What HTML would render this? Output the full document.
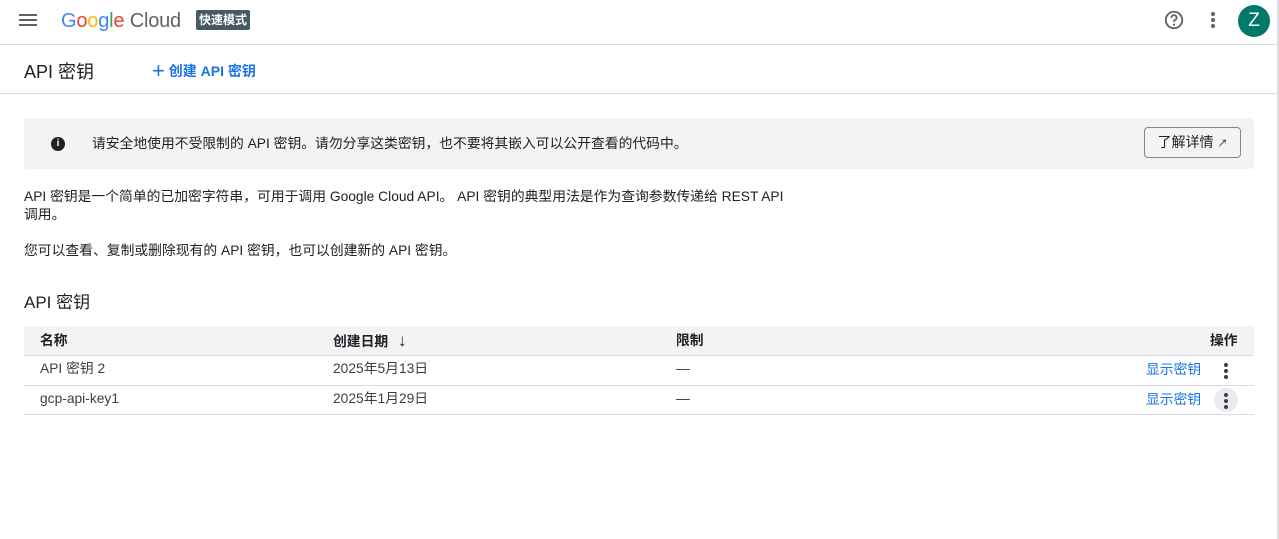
<!DOCTYPE html><html><head><meta charset="utf-8"><style>
body{margin:0;width:1279px;height:539px;overflow:hidden;background:#fff;font-family:"Liberation Sans","Noto Sans CJK SC",sans-serif;color:#202124;position:relative}
.a{position:absolute}
.hdr{left:0;top:0;width:1279px;height:44px;border-bottom:1px solid #dadce0}
.sub{left:0;top:45px;width:1279px;height:48px;border-bottom:1px solid #dadce0}
.t{font-size:13.8px;white-space:nowrap;line-height:16px}
.row{left:24px;width:1230px;border-bottom:1px solid #dadce0;height:29px}
</style></head><body>
<div class="a hdr"></div>
<div class="a" style="left:19px;top:14px;width:18px;height:2px;background:#5f6368;box-shadow:0 5px 0 #5f6368,0 10px 0 #5f6368"></div>
<div class="a" style="left:61px;top:10px;font-size:20px;letter-spacing:-0.2px"><span style="color:#4285f4">G</span><span style="color:#ea4335">o</span><span style="color:#fbbc04">o</span><span style="color:#4285f4">g</span><span style="color:#34a853">l</span><span style="color:#ea4335">e</span> <span style="color:#5f6368">Cloud</span></div>
<div class="a" style="left:196px;top:10px;background:#455a64;color:#fff;font-size:12px;font-weight:bold;padding:0 3px;border-radius:2px;line-height:20px;white-space:nowrap">快速模式</div>
<svg class="a" style="left:1163px;top:9px" width="22" height="22" viewBox="0 0 24 24"><circle cx="12" cy="12" r="9" fill="none" stroke="#5f6368" stroke-width="2"/><path d="M9.2 9.5a2.8 2.8 0 1 1 4 2.5c-.8.4-1.2 1-1.2 2" fill="none" stroke="#5f6368" stroke-width="2"/><circle cx="12" cy="17" r="1.2" fill="#5f6368"/></svg>
<div class="a" style="left:1211px;top:12px;width:4px;height:4px;border-radius:2px;background:#5f6368;box-shadow:0 6px 0 #5f6368,0 12px 0 #5f6368"></div>
<div class="a" style="left:1238px;top:5px;width:32px;height:32px;border-radius:50%;background:#00796b;color:#fff;font-size:19px;text-align:center;line-height:32px">Z</div>
<div class="a sub"></div>
<div class="a" style="left:24px;top:60px;font-size:18px;line-height:24px">API 密钥</div>
<div class="a" style="left:152px;top:59px;color:#1a73e8;font-weight:bold;font-size:14px;line-height:20px;white-space:nowrap"><span style="font-size:22px;font-weight:normal;position:relative;top:2px">+</span> 创建 API 密钥</div>
<div class="a" style="left:24px;top:118px;width:1230px;height:51px;background:#f1f3f4;border-radius:4px"></div>
<div class="a" style="left:51px;top:137px;width:14px;height:14px;border-radius:50%;background:#202124;color:#fff;font-size:10px;font-weight:bold;text-align:center;line-height:14px">i</div>
<div class="a t" style="left:92px;top:136px">请安全地使用不受限制的 API 密钥。请勿分享这类密钥，也不要将其嵌入可以公开查看的代码中。</div>
<div class="a" style="left:1144px;top:127px;width:97px;height:31px;border:1px solid #80868b;border-radius:4px;box-sizing:border-box;text-align:center;line-height:29px;font-size:14px;white-space:nowrap">了解详情 <span style="font-size:10px">↗</span></div>
<div class="a t" style="left:24px;top:188px;line-height:18px">API 密钥是一个简单的已加密字符串，可用于调用 Google Cloud API。 API 密钥的典型用法是作为查询参数传递给 REST API<br>调用。</div>
<div class="a t" style="left:24px;top:243px">您可以查看、复制或删除现有的 API 密钥，也可以创建新的 API 密钥。</div>
<div class="a" style="left:24px;top:291px;font-size:17px;line-height:24px">API 密钥</div>
<div class="a row" style="top:326px;background:#f1f3f4"></div>
<div class="a row" style="top:356px"></div>
<div class="a row" style="top:385px"></div>
<div class="a t" style="left:40px;top:333px;font-weight:bold">名称</div>
<div class="a t" style="left:333px;top:333px;font-weight:bold">创建日期 <span style="font-size:17px;margin-left:6px">↓</span></div>
<div class="a t" style="left:676px;top:333px;font-weight:bold">限制</div>
<div class="a t" style="left:1210px;top:333px;font-weight:bold">操作</div>
<div class="a t" style="left:40px;top:361px;color:#3c4043">API 密钥 2</div>
<div class="a t" style="left:333px;top:361px;color:#3c4043">2025年5月13日</div>
<div class="a t" style="left:676px;top:361px;color:#3c4043">—</div>
<div class="a t" style="left:1146px;top:362px;color:#1a73e8">显示密钥</div>
<div class="a" style="left:1224px;top:363px;width:4px;height:4px;border-radius:2px;background:#3c4043;box-shadow:0 6px 0 #3c4043,0 12px 0 #3c4043"></div>
<div class="a t" style="left:40px;top:391px;color:#3c4043">gcp-api-key1</div>
<div class="a t" style="left:333px;top:391px;color:#3c4043">2025年1月29日</div>
<div class="a t" style="left:676px;top:391px;color:#3c4043">—</div>
<div class="a t" style="left:1146px;top:392px;color:#1a73e8">显示密钥</div>
<div class="a" style="left:1214px;top:388px;width:24px;height:24px;border-radius:50%;background:#e8eaed"></div>
<div class="a" style="left:1224px;top:393px;width:4px;height:4px;border-radius:2px;background:#3c4043;box-shadow:0 6px 0 #3c4043,0 12px 0 #3c4043"></div>
<div class="a" style="left:1277px;top:0;width:2px;height:539px;background:#dadce0"></div>
</body></html>
